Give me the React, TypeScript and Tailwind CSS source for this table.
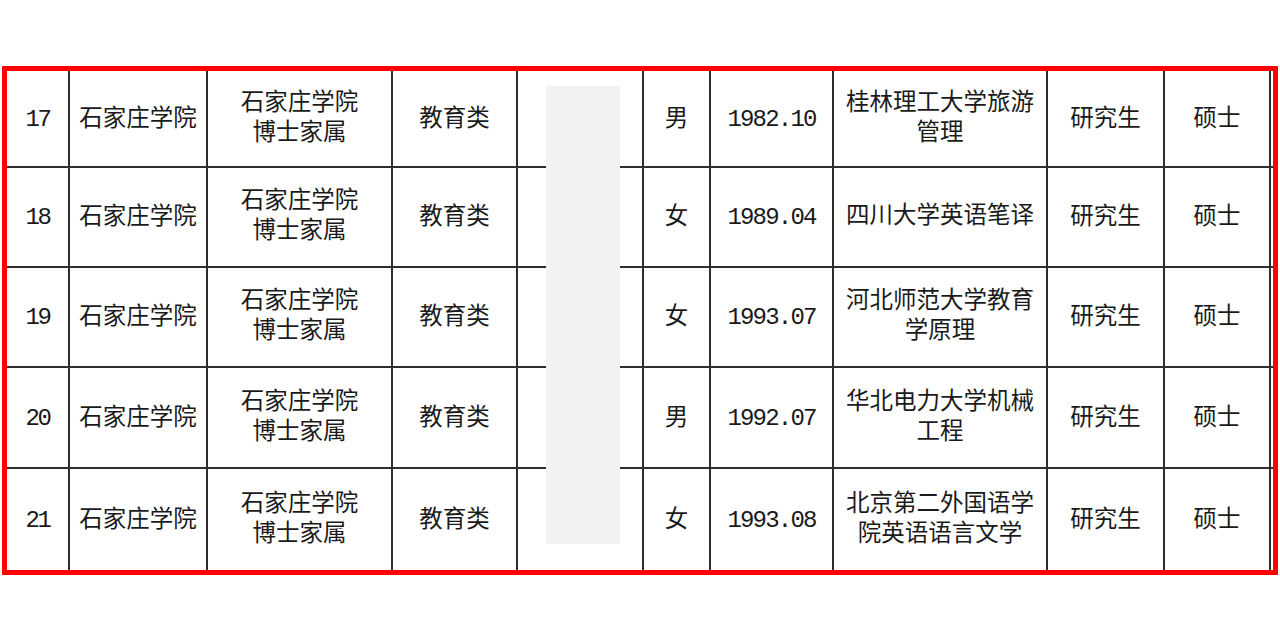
import React from "react";

const rows = [
  { no: "17", sex: "男", born: "1982.10", major: ["桂林理工大学旅游", "管理"], h: "h-[97px]" },
  { no: "18", sex: "女", born: "1989.04", major: ["四川大学英语笔译"], h: "h-[100px]" },
  { no: "19", sex: "女", born: "1993.07", major: ["河北师范大学教育", "学原理"], h: "h-[100px]" },
  { no: "20", sex: "男", born: "1992.07", major: ["华北电力大学机械", "工程"], h: "h-[101px]" },
  { no: "21", sex: "女", born: "1993.08", major: ["北京第二外国语学", "院英语语言文学"], h: "h-[101px]" },
];

const cell = "flex flex-col items-center justify-center text-center border-r-2 border-[#2e2e2e] leading-[30px]";

const App = () => {
  return (
    <div
      className="w-[1280px] h-[639px] bg-white pt-[66px] px-[2px] text-[#1a1a1a] text-[23.5px]"
      style={{ fontFamily: '"Liberation Mono", "Noto Sans CJK SC", monospace' }}
    >
      <div className="relative w-[1276px] h-[509px] border-[5px] border-[#ff0000]">
        {rows.map((r, i) => (
          <div
            key={r.no}
            className={`flex ${r.h} ${i < rows.length - 1 ? "border-b-2 border-[#2e2e2e]" : ""}`}
          >
            <div className={`${cell} w-[63px] text-[24px] tracking-[-2.5px] pt-[2px]`}>{r.no}</div>
            <div className={`${cell} w-[138px] pt-[2px]`}>石家庄学院</div>
            <div className={`${cell} w-[185px]`}>
              <span>石家庄学院</span>
              <span>博士家属</span>
            </div>
            <div className={`${cell} w-[125px] pt-[2px]`}>教育类</div>
            <div className={`${cell} w-[126px]`}></div>
            <div className={`${cell} w-[67px] pt-[2px]`}>{r.sex}</div>
            <div className={`${cell} w-[123px] text-[24px] tracking-[-1.8px] pt-[2px]`}>{r.born}</div>
            <div className={`${cell} w-[214px]`}>
              {r.major.map((m) => (
                <span key={m}>{m}</span>
              ))}
            </div>
            <div className={`${cell} w-[117px] pt-[2px]`}>研究生</div>
            <div className={`${cell} w-[106px] pt-[2px]`}>硕士</div>
          </div>
        ))}
        {/* redacted name column */}
        <div className="absolute left-[539px] top-[15px] w-[74px] h-[458px] bg-[#f2f2f2]" />
      </div>
    </div>
  );
};

export default App;
